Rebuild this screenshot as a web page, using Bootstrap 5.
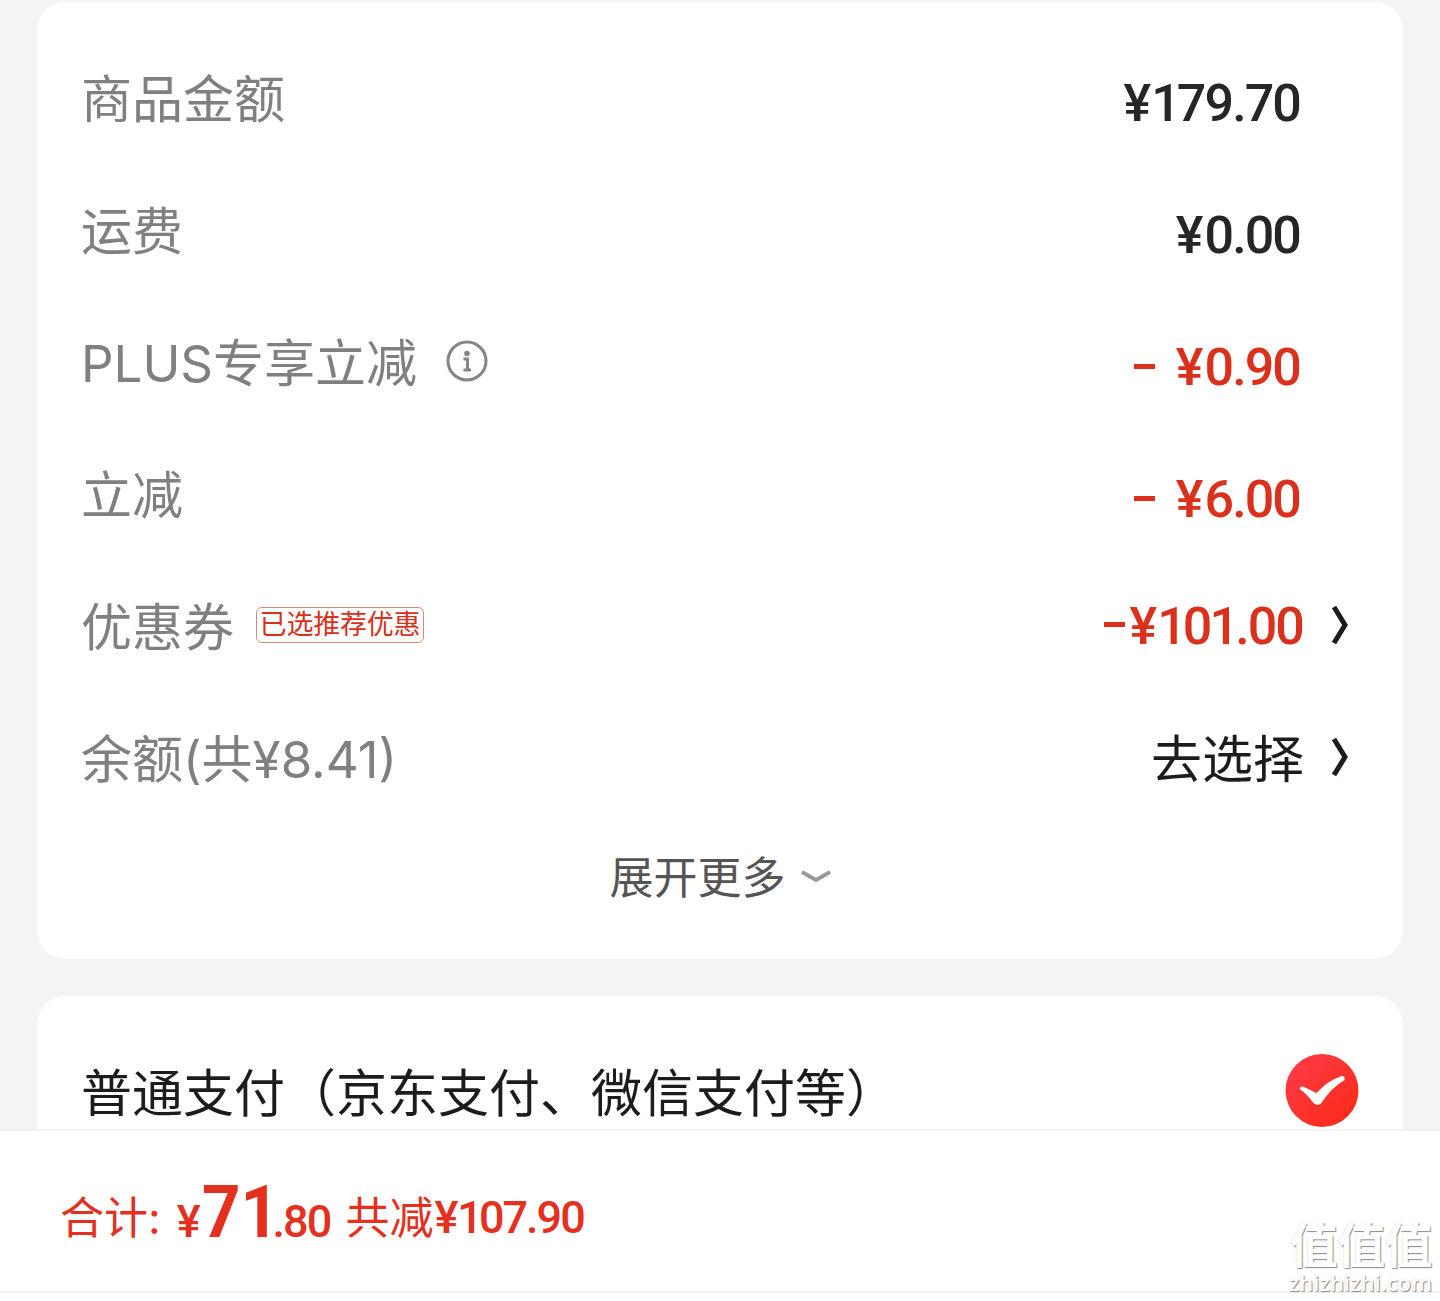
<!DOCTYPE html>
<html lang="zh-CN">
<head>
    <meta charset="UTF-8" />
    <title>确认订单</title>
    <meta name="viewport" content="width=device-width, initial-scale=1" />
    <link href="https://cdn.jsdelivr.net/npm/bootstrap@5.3.0/dist/css/bootstrap.min.css" rel="stylesheet" />
    <style>
        body {
            background: #f4f4f4;
            color: #1c1c1c;
            font-family: Inter, "Noto Sans CJK SC", sans-serif;
            font-size: 51px;
            line-height: 1;
            height: 1301px;
            overflow: hidden;
        }
        .pagina { height: 1301px; padding-top: 2px; }
        .bloque { margin: 0 37px; border-radius: 28px; background: #fff; }

        /* filas del resumen */
        .resumen { height: 957px; padding: 29px 54px 0 44px; }
        .fila { height: 132px; white-space: nowrap; }
        .etiqueta, .accion { padding-top: 4px; }
        .etiqueta { color: #808080; }
        .info { margin: -4px 0 0 29px; }
        .flecha { margin-left: 27px; }
        .precio {
            font-family: Roboto, "Noto Sans CJK SC", sans-serif;
            font-weight: 500;
            font-size: 52px;
            letter-spacing: -1.9px;
            color: #262626;
        }
        .precio .yen { margin-right: 3px; }
        .precio .uno { margin: 0 -2px 0 -1px; }
        .sin-flecha { padding: 14px 49px 0 0; }
        .con-flecha { padding: 3px 1px 0 0; }
        .rojo { color: #da301c; }
        .menos { width: 21px; height: 5px; margin: -4px 21px 0 0; background: currentColor; }
        .con-flecha .menos { margin-right: 4px; }
        .cupon {
            margin-left: 22px;
            font-size: 27px;
            letter-spacing: -.2px;
            width: 168px;
            height: 36px;
            line-height: 34px;
            border: 1px solid #d78a7c;
            border-radius: 6px;
        }
        .expandir { height: 110px; padding-left: 10px; font-size: 44px; color: #555; }
        .expandir svg { margin: -3px 0 0 15px; }

        /* forma de pago */
        .pago { height: 133px; margin-top: 37px; padding: 58px 44px 0; border-radius: 28px 28px 0 0; overflow: hidden; }
        .texto-pago { padding-top: 14px; }

        /* barra del total */
        .pie { height: 164px; border-top: 2px solid #f2f2f2; border-bottom: 2px solid #f2f2f2; padding-left: 60px; color: #e3301f; }
        .pie .precio { color: inherit; font-size: 45px; }
        .total-texto { font-size: 44px; padding-top: 13px; }
        .pie .moneda { margin-left: 16px; padding-top: 20px; }
        .pie .entero {
            font-size: 73px;
            font-weight: 700;
            letter-spacing: 0;
            margin: 0 -13px 0 3px;
            padding-top: 2px;
            transform: scaleX(.92);
            transform-origin: left;
        }
        .pie .decimal { padding-top: 20px; }
        .pie .ahorro { margin-left: 15px; }
        .pie .descuento { margin-left: 1px; padding-top: 12px; letter-spacing: -2px; }
        .pie .yen { margin-right: 2px; }
        .fin { height: 8px; }

        .marca {
            right: 8px;
            bottom: 7px;
            color: #fff;
            text-shadow: 1px 1px 1px #8a8a8a, 0 0 1px #ccc;
        }
        .marca-zh { font-size: 48px; font-weight: 700; letter-spacing: -.6px; height: 49px; line-height: 49px; }
        .marca-url { font-family: "Open Sans", sans-serif; font-size: 22px; font-weight: 600; height: 24px; line-height: 24px; }
    </style>
</head>
<body>
    <div class="pagina position-relative d-flex flex-column">

        <!-- Resumen de importes -->
        <section class="bloque resumen">
            <div class="fila d-flex justify-content-between align-items-center">
                <span class="etiqueta">商品金额</span>
                <span class="precio sin-flecha"><span class="yen">¥</span><span class="uno">1</span>79.70</span>
            </div>
            <div class="fila d-flex justify-content-between align-items-center">
                <span class="etiqueta">运费</span>
                <span class="precio sin-flecha"><span class="yen">¥</span>0.00</span>
            </div>
            <div class="fila d-flex justify-content-between align-items-center">
                <span class="etiqueta d-flex align-items-center">PLUS专享立减
                    <svg class="info" width="42" height="42" viewBox="0 0 42 42" fill="none">
                        <circle cx="21" cy="21" r="19" stroke="#858585" stroke-width="3" />
                        <circle cx="21" cy="13.5" r="2.8" fill="#858585" />
                        <path d="M17.5 19H21.5V30M17.5 30H25" stroke="#858585" stroke-width="3" />
                    </svg>
                </span>
                <span class="precio rojo sin-flecha d-flex align-items-center"><i class="menos"></i><span class="yen">¥</span>0.90</span>
            </div>
            <div class="fila d-flex justify-content-between align-items-center">
                <span class="etiqueta">立减</span>
                <span class="precio rojo sin-flecha d-flex align-items-center"><i class="menos"></i><span class="yen">¥</span>6.00</span>
            </div>
            <div class="fila d-flex justify-content-between align-items-center">
                <div class="d-flex align-items-center">
                    <span class="etiqueta">优惠券</span>
                    <span class="cupon rojo text-center">已选推荐优惠</span>
                </div>
                <div class="d-flex align-items-center">
                    <span class="precio rojo con-flecha d-flex align-items-center"><i class="menos"></i><span class="yen">¥</span><span class="uno">1</span>0<span class="uno">1</span>.00</span>
                    <svg class="flecha" width="18" height="40" viewBox="0 0 18 40" fill="none"><path d="M3 2L14 20L3 38" stroke="#1c1c1c" stroke-width="5" /></svg>
                </div>
            </div>
            <div class="fila d-flex justify-content-between align-items-center">
                <span class="etiqueta">余额(共¥8.41)</span>
                <div class="d-flex align-items-center">
                    <span class="accion">去选择</span>
                    <svg class="flecha" width="18" height="40" viewBox="0 0 18 40" fill="none"><path d="M3 2L14 20L3 38" stroke="#1c1c1c" stroke-width="5" /></svg>
                </div>
            </div>
            <div class="expandir d-flex justify-content-center align-items-center">
                <span>展开更多</span>
                <svg width="30" height="14" viewBox="0 0 30 14" fill="none"><path d="M1 2L15 10L29 2" stroke="#999" stroke-width="4" /></svg>
            </div>
        </section>

        <!-- Forma de pago -->
        <section class="bloque pago d-flex justify-content-between align-items-start">
            <span class="texto-pago">普通支付（京东支付、微信支付等）</span>
            <svg class="flex-shrink-0" width="74" height="74" viewBox="0 0 74 74">
                <defs>
                    <linearGradient id="rojoCheck" x1="0" y1="0" x2="1" y2="1">
                        <stop offset="0" stop-color="#ff3d4b" />
                        <stop offset="1" stop-color="#fb2814" />
                    </linearGradient>
                </defs>
                <circle cx="37" cy="36.5" r="36.5" fill="url(#rojoCheck)" />
                <path d="M14.5 35Q16 31 20 33.5L31.5 39Q42 27 56.5 22Q60.5 22 59.5 26Q46 34 36.5 49Q32 53 28 48.500Q22 40 14.500 35Z" fill="#fff" />
            </svg>
        </section>

        <!-- Total -->
        <footer class="pie bg-white d-flex align-items-center">
            <span class="total-texto">合计:</span>
            <span class="precio moneda">¥</span>
            <span class="precio entero">71</span>
            <span class="precio decimal">.80</span>
            <span class="total-texto ahorro">共减</span>
            <span class="precio descuento"><span class="yen">¥</span><span class="uno">1</span>07.90</span>
        </footer>
        <div class="fin bg-white"></div>

        <div class="marca position-absolute text-end">
            <div class="marca-zh">值值值</div>
            <div class="marca-url">zhizhizhi.com</div>
        </div>
    </div>

    <script src="https://cdn.jsdelivr.net/npm/bootstrap@5.3.0/dist/js/bootstrap.bundle.min.js"></script>
</body>
</html>
